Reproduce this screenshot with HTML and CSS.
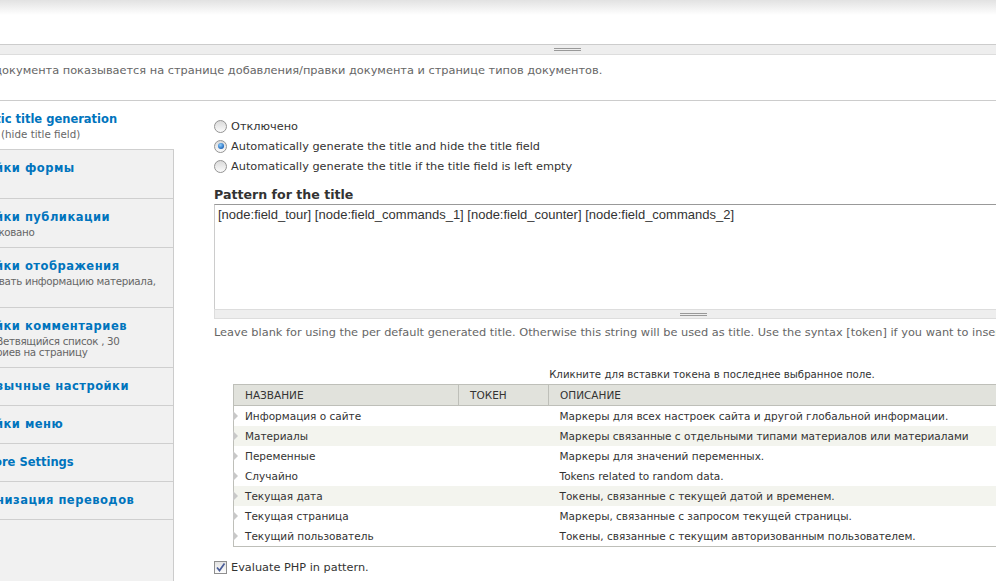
FILE: index.html
```html
<!DOCTYPE html>
<html lang="ru">
  <head>
    <meta charset="utf-8">
    <link rel="stylesheet" href="styles.css">
  </head>
  <body>
    <div class="topshade"></div>
    <div class="page">
      <div class="prev-field">
        <div class="prev-textarea"></div>
        <div class="grippie"><span></span></div>
        <div class="description top-desc">Описание документа показывается на странице добавления/правки документа и странице типов документов.</div>
      </div>

      <div class="vertical-tabs">
        <ul class="vt-list">
          <li class="selected" lang="en"><a href="#"><strong>Automatic title generation</strong><span class="summary">Automatic (hide title field)</span></a></li>
          <li><a href="#"><strong>Настройки формы</strong><span class="summary">Нет</span></a></li>
          <li><a href="#"><strong>Настройки публикации</strong><span class="summary">Не опубликовано</span></a></li>
          <li><a href="#"><strong>Настройки отображения</strong><span class="summary">Не показывать информацию материала, тизер</span></a></li>
          <li><a href="#"><strong>Настройки комментариев</strong><span class="summary">Открыто, Ветвящийся список , 30 комментариев на страницу</span></a></li>
          <li><a href="#"><strong>Многоязычные настройки</strong></a></li>
          <li><a href="#"><strong>Настройки меню</strong></a></li>
          <li lang="en"><a href="#"><strong>Node More Settings</strong></a></li>
          <li><a href="#"><strong>Синхронизация переводов</strong></a></li>
        </ul>

        <div class="vt-pane">
          <div class="radios">
            <label class="radio"><span class="radio-box"></span>Отключено</label>
            <label class="radio checked"><span class="radio-box"></span>Automatically generate the title and hide the title field</label>
            <label class="radio"><span class="radio-box"></span>Automatically generate the title if the title field is left empty</label>
          </div>

          <h3 class="field-label">Pattern for the title</h3>
          <div class="textarea">
            <div class="textarea-body">[node:field_tour] [node:field_commands_1] [node:field_counter] [node:field_commands_2]</div>
            <div class="grippie"><span></span></div>
          </div>
          <div class="description">Leave blank for using the per default generated title. Otherwise this string will be used as title. Use the syntax [token] if you want to insert a replacement pattern.</div>

          <div class="token-tree">
            <div class="token-help">Кликните для вставки токена в последнее выбранное поле.</div>
            <table class="token-table">
              <thead>
                <tr><th class="col-name">Название</th><th class="col-token">Токен</th><th>Описание</th></tr>
              </thead>
              <tbody>
                <tr><td class="name"><span class="expander"></span>Информация о сайте</td><td></td><td>Маркеры для всех настроек сайта и другой глобальной информации.</td></tr>
                <tr class="even"><td class="name"><span class="expander"></span>Материалы</td><td></td><td>Маркеры связанные с отдельными типами материалов или материалами</td></tr>
                <tr><td class="name"><span class="expander"></span>Переменные</td><td></td><td>Маркеры для значений переменных.</td></tr>
                <tr><td class="name"><span class="expander"></span>Случайно</td><td></td><td>Tokens related to random data.</td></tr>
                <tr class="even"><td class="name"><span class="expander"></span>Текущая дата</td><td></td><td>Токены, связанные с текущей датой и временем.</td></tr>
                <tr><td class="name"><span class="expander"></span>Текущая страница</td><td></td><td>Маркеры, связанные с запросом текущей страницы.</td></tr>
                <tr><td class="name"><span class="expander"></span>Текущий пользователь</td><td></td><td>Токены, связанные с текущим авторизованным пользователем.</td></tr>
              </tbody>
            </table>
          </div>

          <label class="checkbox">
            <span class="check-box"><svg width="11" height="11" viewBox="0 0 11 11"><path d="M2 5.5 L4.5 8.5 L9.5 1.5" fill="none" stroke="#4a5d99" stroke-width="1.7"/></svg></span>
            Evaluate PHP in pattern.
          </label>
        </div>
      </div>
    </div>
  </body>
</html>
```

FILE: styles.css
```css
body          { margin: 0; overflow: hidden; background: #fff; color: #333; font-family: "DejaVu Sans", Verdana, sans-serif; font-size: 11.3px; }
.topshade     { height: 15px; background: linear-gradient(#e2e2e2, #fff); }
.page         { width: 1320px; margin-left: -68px; }

.prev-field    { width: 1270px; }
.prev-textarea { height: 29px; border-bottom: 1px solid #ccc; }
.grippie       { height: 9px; background: #eee; border: 1px solid #ddd; border-top: 0; display: flex; justify-content: center; align-items: center; }
.grippie span  { width: 27px; height: 1px; border-top: 1px solid #999; border-bottom: 1px solid #999; }
.prev-field .grippie { height: 9px; border-left: 0; border-right: 0; }

.description  { color: #666; font-size: 11.35px; line-height: 15px; white-space: nowrap; }
.top-desc     { margin-top: 8px; height: 37px; }

.vertical-tabs { display: flex; border-top: 1px solid #ccc; min-height: 500px; }
.vt-list       { list-style: none; margin: 0; padding: 0; width: 241px; flex: none; background: #f1f1f1; border-right: 1px solid #ccc; }
.vt-list li    { border-bottom: 1px solid #cfcfcf; }
.vt-list li.selected { background: #fff; margin-right: -1px; }
.vt-list a     { display: block; padding: 9px 0 9px 13px; min-height: 19px; text-decoration: none; }
.vt-list strong  { display: block; color: #0074bd; font-size: 11.5px; line-height: 18px; letter-spacing: .5px; white-space: nowrap; }
.vt-list .summary { display: block; margin-top: 1px; color: #666; font-size: 10.3px; line-height: 11px; letter-spacing: -.3px; }
.vt-list a:lang(en) strong,
.vt-list a:lang(en) .summary { letter-spacing: 0; }

.vt-pane      { flex: 1; padding: 15px 0 0 40px; }

.radio        { display: flex; align-items: center; height: 20px; }
.radio-box    { width: 13px; height: 13px; box-sizing: border-box; border-radius: 50%; border: 1px solid #939393; background: linear-gradient(#dadada, #fbfbfb); margin-right: 4px; display: flex; align-items: center; justify-content: center; }
.radio.checked .radio-box::after { content: ""; width: 6px; height: 6px; border-radius: 50%; background: radial-gradient(circle at 40% 35%, #8fd0ff, #1a62b8 75%); }

.field-label  { margin: 11px 0 1px; font-size: 12.6px; line-height: 16px; color: #333; }

.textarea      { width: 959px; }
.textarea-body { height: 98px; border: 1px solid #ccc; border-top-color: #999; border-bottom: 0; padding: 2px 3px 4px; font-family: "Liberation Sans", Arial, sans-serif; font-size: 13px; line-height: 15px; color: #333; }
.textarea .grippie { border-top: 1px solid #ddd; height: 8px; }
.textarea + .description { margin-top: 6px; }

.token-tree   { margin: 27px 0 0 19px; width: 958px; }
.token-help   { text-align: center; font-size: 10.2px; line-height: 15px; margin-bottom: 2px; color: #333; }

.token-table  { border-collapse: collapse; width: 100%; color: #333; font-size: 10.5px; }
.token-table th { background: #e1e2dc; border: 1px solid #bebfb9; height: 20px; padding: 0 11px; text-align: left; font-weight: normal; text-transform: uppercase; }
.token-table .col-name  { width: 202px; }
.token-table .col-token { width: 67px; }
.token-table tbody tr   { background: #fff; border-left: 1px solid #bebfb9; border-right: 1px solid #bebfb9; }
.token-table tbody tr.even { background: #f3f4ee; }
.token-table tbody tr:last-child { border-bottom: 1px solid #bebfb9; }
.token-table td   { height: 20px; padding: 0 11px; white-space: nowrap; }
.token-table .name { position: relative; }
.expander     { position: absolute; left: -1px; top: 5px; width: 0; height: 0; border-left: 5px solid #c8c8c8; border-top: 5px solid transparent; border-bottom: 5px solid transparent; }

.checkbox     { display: flex; align-items: center; height: 20px; margin-top: 10px; }
.check-box    { width: 13px; height: 13px; box-sizing: border-box; border: 1px solid #8f8f8f; background: linear-gradient(#e3e3e3, #fcfcfc); margin-right: 4px; display: flex; align-items: center; justify-content: center; }
```
